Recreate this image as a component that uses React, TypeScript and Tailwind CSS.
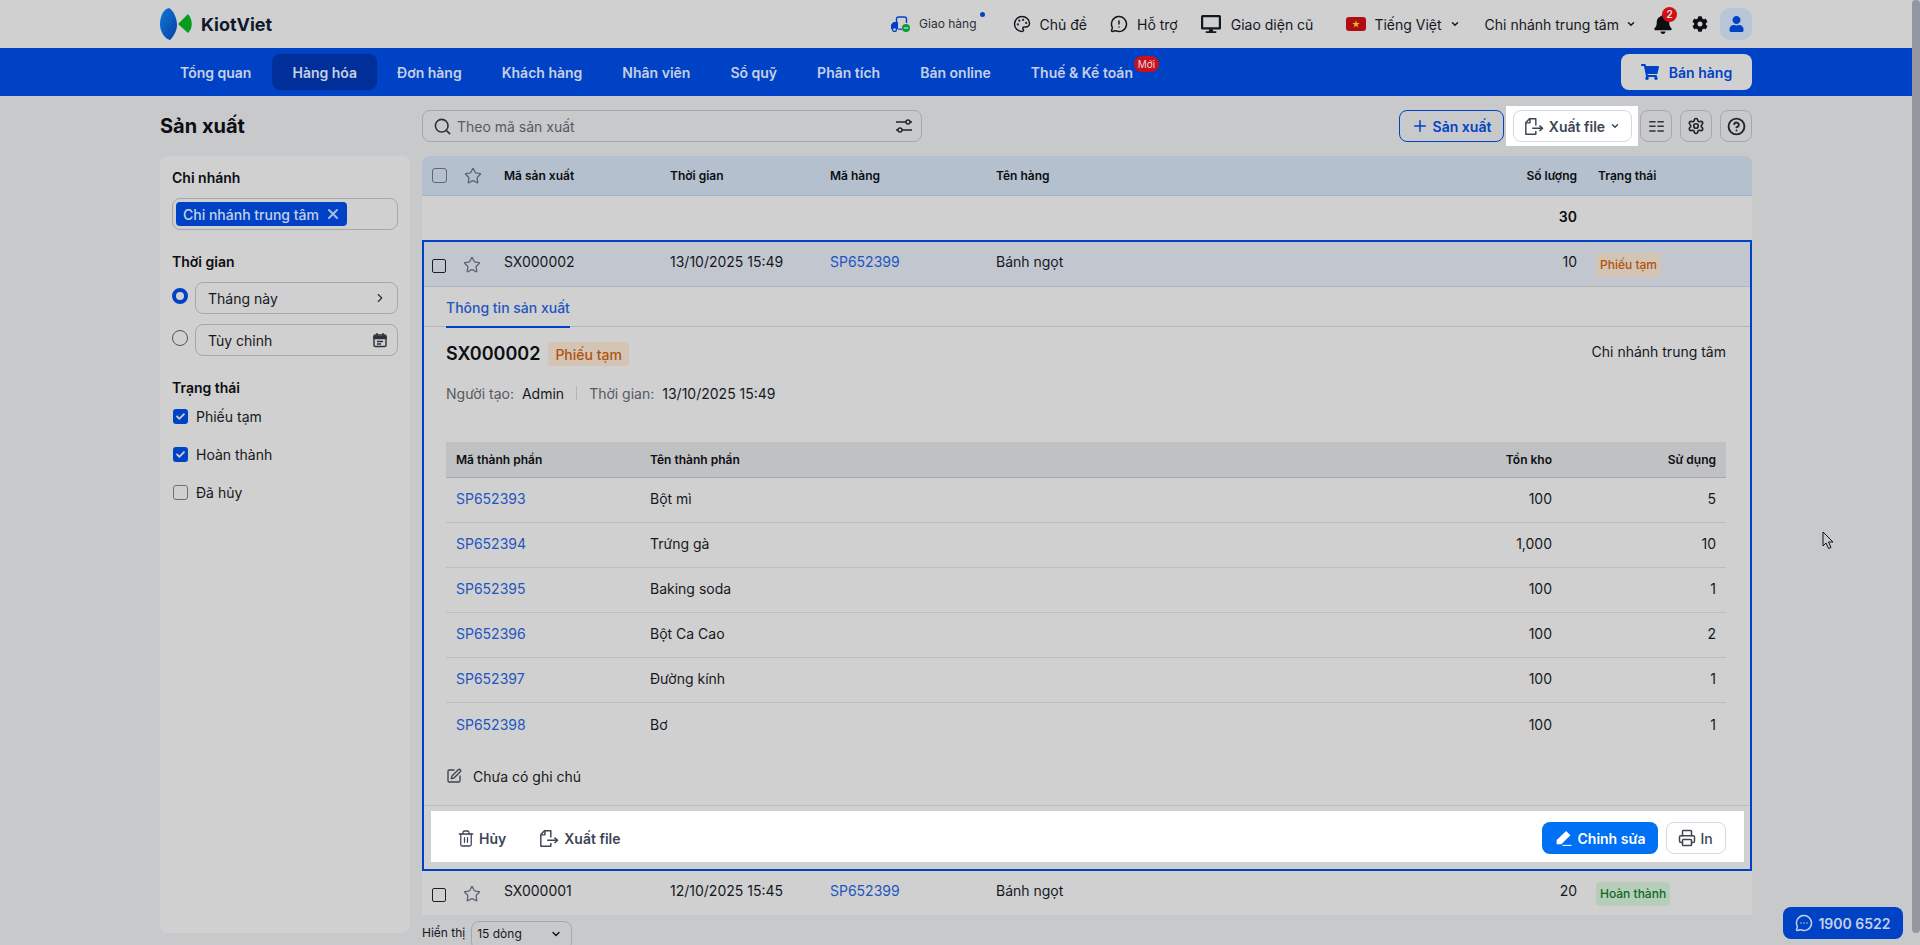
import {
  ChevronDown,
  ChevronRight,
  CircleHelp,
  MessageCircleMore,
  MessageCircleWarning,
  Palette,
  Plus,
  Printer,
  Search,
  Settings,
  SquarePen,
  Star,
  Trash2,
  X,
} from "lucide-react";
import { FaBell, FaCheck, FaCog, FaDesktop, FaShoppingCart, FaUser } from "react-icons/fa";

const navItems = ["Tổng quan", "Hàng hóa", "Đơn hàng", "Khách hàng", "Nhân viên", "Sổ quỹ", "Phân tích", "Bán online"];

const parts = [
  { code: "SP652393", name: "Bột mì", stock: "100", used: "5" },
  { code: "SP652394", name: "Trứng gà", stock: "1,000", used: "10" },
  { code: "SP652395", name: "Baking soda", stock: "100", used: "1" },
  { code: "SP652396", name: "Bột Ca Cao", stock: "100", used: "2" },
  { code: "SP652397", name: "Đường kính", stock: "100", used: "1" },
  { code: "SP652398", name: "Bơ", stock: "100", used: "1" },
];

const ExportIcon = ({ className }: { className?: string }) => (
  <svg viewBox="0 0 22 20" fill="none" stroke="currentColor" strokeWidth="1.6" className={className}>
    <path d="M13 9V1.5H6L2 5.5V18.5H13V15" strokeLinejoin="round" />
    <path d="M6.5 1.5V6H2" strokeLinejoin="round" />
    <path d="M9 12H20M17 9L20.5 12L17 15" strokeLinejoin="round" />
  </svg>
);

const Logo = () => (
  <svg viewBox="0 0 32 32" className="w-[32px] h-[32px] shrink-0">
    <defs>
      <linearGradient id="kv" x1="0" y1="0" x2="1" y2="1">
        <stop offset="0" stopColor="#0c78d2" />
        <stop offset="1" stopColor="#0a3fa8" />
      </linearGradient>
    </defs>
    <path d="M9 0C3 1 0 9 0 16C0 24 5 31 10 32C14 28 17 22 17 17C17 11 14 3 9 0Z" fill="url(#kv)" />
    <path d="M18 16L28 6C33 12 33 20 28 25Z" fill="#079c1a" />
  </svg>
);

const Truck = () => (
  <svg viewBox="0 0 20 16" fill="none" className="w-[20px] h-[16px]">
    <path d="M6.5 6V3C6.5 1.8 7.3 1 8.5 1H14.5C15.7 1 16.5 1.8 16.5 3V7" stroke="#0042c6" strokeWidth="1.4" />
    <path d="M1 13V8.5L3.5 6H8V13Z" fill="#0042c6" />
    <path d="M8 13.2H12" stroke="#0042c6" strokeWidth="1.2" />
    <circle cx="4.5" cy="13.5" r="2" fill="#d0d0d0" stroke="#0042c6" strokeWidth="1.3" />
    <circle cx="16" cy="12" r="4" fill="#0a9a3c" />
    <path d="M13.8 12H18.2" stroke="#d0d0d0" strokeWidth="1.3" />
  </svg>
);

const SlidersIcon = () => (
  <svg viewBox="0 0 18 16" fill="none" stroke="#20242b" strokeWidth="1.4" className="w-[18px] h-[16px]">
    <path d="M1 4H11M15 4H17M1 12H3M7 12H17" />
    <circle cx="13" cy="4" r="2" />
    <circle cx="5" cy="12" r="2" />
  </svg>
);

const StarOutline = () => <Star className="w-[18px] h-[18px] text-[#5d6572]" strokeWidth={1.8} />;

const CheckRow = ({ label, checked }: { label: string; checked: boolean }) => (
  <div className="flex items-center gap-[8px] h-[38px]">
    {checked ? (
      <span className="flex justify-center items-center w-[15px] h-[15px] ml-[1px] rounded-[3px] bg-[#0042c6]">
        <FaCheck className="w-[9px] h-[9px] text-[#d0d0d0]" />
      </span>
    ) : (
      <span className="block w-[15px] h-[15px] ml-[1px] rounded-[3px] border border-[#6b7079]" />
    )}
    <span className="text-[14px] text-[#15181e]">{label}</span>
  </div>
);

const Sidebar = () => (
  <aside className="w-[250px] h-[777px] shrink-0 rounded-[8px] bg-[#d0d0d0] px-[12px] pt-[12px]">
    <h3 className="text-[14px] leading-[20px] font-semibold text-[#0c0e12]">Chi nhánh</h3>
    <div className="flex items-center h-[32px] mt-[10px] px-[3px] rounded-[8px] border border-[#a5a7ad]">
      <span className="flex items-center gap-[6px] h-[24px] pl-[7px] pr-[6px] rounded-[4px] bg-[#0042c6] text-[14px] font-medium text-[#c6d0e4]">
        Chi nhánh trung tâm
        <X className="w-[16px] h-[16px] text-[#a8bde0]" strokeWidth={3} />
      </span>
    </div>

    <h3 className="mt-[22px] text-[14px] leading-[20px] font-semibold text-[#0c0e12]">Thời gian</h3>
    <div className="flex items-center gap-[7px] mt-[10px]">
      <span className="block w-[16px] h-[16px] -mt-[4px] rounded-full border-[4px] border-[#0042c6]" />
      <div className="flex flex-1 justify-between items-center h-[32px] pl-[12px] pr-[10px] rounded-[8px] border border-[#a5a7ad] text-[14px] text-[#15181e]">
        Tháng này
        <ChevronRight className="w-[14px] h-[14px] text-[#2b2f36]" />
      </div>
    </div>
    <div className="flex items-center gap-[7px] mt-[10px]">
      <span className="block w-[16px] h-[16px] -mt-[4px] rounded-full border border-[#4f545c]" />
      <div className="flex flex-1 justify-between items-center h-[32px] pl-[12px] pr-[9px] rounded-[8px] border border-[#a5a7ad] text-[14px] text-[#15181e]">
        Tùy chỉnh
        <svg viewBox="0 0 16 16" className="w-[16px] h-[16px]" fill="none" stroke="#2b323c" strokeWidth="1.4">
          <rect x="2" y="3" width="12" height="11.5" rx="1.5" />
          <path d="M2 4.5H14V6.5H2Z" fill="#2b323c" />
          <path d="M5 1V4M11 1V4" />
          <path d="M5 9.5H11M5 12H9" />
        </svg>
      </div>
    </div>

    <h3 className="mt-[22px] text-[14px] leading-[20px] font-semibold text-[#0c0e12]">Trạng thái</h3>
    <div className="mt-[-1px]">
      <CheckRow label="Phiếu tạm" checked />
      <CheckRow label="Hoàn thành" checked />
      <CheckRow label="Đã hủy" checked={false} />
    </div>
  </aside>
);

const Badge = ({ tone, label }: { tone: "orange" | "green"; label: string }) => (
  <span
    className={`inline-flex items-center h-[24px] px-[4px] rounded-[4px] text-[12px] font-medium ${
      tone === "orange" ? "bg-[#d3c4b4] text-[#b0520f]" : "bg-[#b7ccb9] text-[#0a6b1c]"
    }`}
  >
    {label}
  </span>
);

type RowProps = {
  code: string;
  time: string;
  product: string;
  qty: string;
  status: "orange" | "green";
  label: string;
  selected?: boolean;
};

const Row = ({ code, time, product, qty, status, label, selected }: RowProps) => (
  <div
    className={`flex items-center text-[14px] text-[#15181e] ${
      selected ? "h-[45px] bg-[#c2c7cf] border-b border-[#b3b6bc]" : "h-[44px] bg-[#d0d0d0] px-[2px]"
    }`}
  >
    <div className="flex items-center gap-[17px] w-[80px] pl-[8px] pt-[4px]">
      <span className="block w-[14px] h-[14px] rounded-[2px] border border-[#1b1f27]" />
      <span className="-mt-[3px]">
        <StarOutline />
      </span>
    </div>
    <span className="w-[166px] pb-[5px]">{code}</span>
    <span className="w-[160px] pb-[5px]">{time}</span>
    <span className="w-[166px] pb-[5px] text-[#1f55c0]">{product}</span>
    <span className="flex-1 pb-[5px]">Bánh ngọt</span>
    <span className="w-[50px] pb-[5px] text-right">{qty}</span>
    <span className="w-[173px] pl-[19px] pt-[1px]">
      <Badge tone={status} label={label} />
    </span>
  </div>
);

const Detail = () => (
  <div className="border-2 border-[#0042c6] bg-[#d0d0d0]">
    <Row
      code="SX000002"
      time="13/10/2025 15:49"
      product="SP652399"
      qty="10"
      status="orange"
      label="Phiếu tạm"
      selected
    />

    <div className="flex h-[40px] pl-[22px] border-b border-[#b5b6b9]">
      <span className="flex items-center h-[41px] pt-[1px] border-b-2 border-[#0042c6] text-[14px] font-medium text-[#1f55c0]">
        Thông tin sản xuất
      </span>
    </div>

    <div className="pl-[22px] pr-[24px]">
      <div className="flex justify-between items-start pt-[15px]">
        <div className="flex items-center gap-[8px]">
          <span className="text-[18px] leading-[24px] font-semibold text-[#0c0e12]">SX000002</span>
          <span className="flex items-center h-[24px] px-[7px] rounded-[4px] bg-[#d3c4b4] text-[14px] font-medium text-[#b0520f]">
            Phiếu tạm
          </span>
        </div>
        <span className="text-[14px] leading-[20px] text-[#15181e]">Chi nhánh trung tâm</span>
      </div>

      <div className="flex items-center h-[20px] mt-[17px] text-[14px]">
        <span className="text-[#555a63]">Người tạo:</span>
        <span className="ml-[8px] text-[#15181e]">Admin</span>
        <span className="w-px h-[14px] mx-[12px] bg-[#b5b6b9]" />
        <span className="text-[#555a63]">Thời gian:</span>
        <span className="ml-[8px] text-[#15181e]">13/10/2025 15:49</span>
      </div>

      {/* Component table */}
      <div className="mt-[39px]">
        <div className="flex items-center h-[36px] px-[10px] bg-[#c0c1c3] border-b border-[#a6a8ac] text-[12px] font-semibold text-[#0c0e12]">
          <span className="w-[194px]">Mã thành phần</span>
          <span className="flex-1">Tên thành phần</span>
          <span className="w-[100px] text-right">Tồn kho</span>
          <span className="w-[164px] text-right">Sử dụng</span>
        </div>
        {parts.map((p, i) => (
          <div
            key={p.code}
            className={`flex items-center h-[45px] pb-[3px] px-[10px] text-[14px] text-[#15181e] ${
              i < parts.length - 1 ? "border-b border-[#bcbdc0]" : ""
            }`}
          >
            <span className="w-[194px] text-[#1f55c0]">{p.code}</span>
            <span className="flex-1">{p.name}</span>
            <span className="w-[100px] text-right">{p.stock}</span>
            <span className="w-[164px] text-right">{p.used}</span>
          </div>
        ))}
      </div>

      <div className="flex items-center gap-[11px] h-[20px] mt-[18px] text-[14px] text-[#15181e]">
        <SquarePen className="w-[16px] h-[16px] text-[#3a414c]" />
        Chưa có ghi chú
      </div>
    </div>

    <div className="mt-[19px] pt-[5px] pb-[7px] border-t border-[#bcbdc0]">
      <div className="flex justify-between items-center h-[51px] ml-[7px] mr-[6px] pl-[26px] pr-[18px] pt-[3px] bg-white">
        <div className="flex items-center gap-[33px] text-[14px] font-semibold text-[#3d4654]">
          <span className="flex items-center gap-[4px]">
            <Trash2 className="w-[18px] h-[19px]" strokeWidth={1.7} />
            Hủy
          </span>
          <span className="flex items-center gap-[5px]">
            <ExportIcon className="w-[20px] h-[19px]" />
            Xuất file
          </span>
        </div>
        <div className="flex items-center gap-[8px]">
          <button className="flex justify-center items-center gap-[6px] w-[116px] h-[32px] rounded-[8px] bg-[#0070f4] text-[14px] font-semibold text-white">
            <svg viewBox="0 0 16 16" className="w-[17px] h-[17px]" fill="white">
              <path d="M10.5 1L14.5 5L6 13.5H1.5V9.5Z" />
              <path d="M7 15H15.5V14H7Z" />
            </svg>
            Chỉnh sửa
          </button>
          <button className="flex justify-center items-center gap-[4px] w-[60px] h-[32px] pr-[1px] rounded-[8px] border border-[#d5d8de] bg-white text-[14px] font-medium text-[#3d4654]">
            <Printer className="w-[18px] h-[18px]" strokeWidth={2} />
            In
          </button>
        </div>
      </div>
    </div>
  </div>
);

const MainTable = () => (
  <section className="flex-1 min-w-0">
    <div className="flex items-center h-[40px] rounded-t-[8px] bg-[#b4c0cd] border-b border-[#9fb1cc] text-[12px] font-semibold text-[#0c0e12]">
      <div className="flex items-center gap-[17px] w-[82px] pl-[10px]">
        <span className="block w-[15px] h-[15px] rounded-[3px] border border-[#5f6672]" />
        <StarOutline />
      </div>
      <span className="w-[166px]">Mã sản xuất</span>
      <span className="w-[160px]">Thời gian</span>
      <span className="w-[166px]">Mã hàng</span>
      <span className="flex-1">Tên hàng</span>
      <span className="w-[100px] text-right">Số lượng</span>
      <span className="w-[175px] pl-[21px]">Trạng thái</span>
    </div>
    <div className="flex items-center justify-end h-[44px] pb-[4px] pr-[175px] bg-[#d0d0d0] text-[14px] font-semibold text-[#0c0e12]">
      30
    </div>
    <Detail />
    <Row code="SX000001" time="12/10/2025 15:45" product="SP652399" qty="20" status="green" label="Hoàn thành" />
    <div className="flex items-center gap-[6px] h-[29px] mt-[6px] text-[12px] text-[#15181e]">
      <span className="pb-[5px]">Hiển thị</span>
      <span className="flex justify-between items-center w-[101px] h-[29px] pl-[5px] pr-[9px] pb-[3px] rounded-[8px] border border-[#a5a7ad] text-[12px]">
        15 dòng
        <ChevronDown className="w-[12px] h-[12px]" strokeWidth={3} />
      </span>
    </div>
  </section>
);

export default function App() {
  return (
    <div className="relative flex h-screen overflow-hidden bg-[#c8c9cb] font-['Inter',sans-serif]">
      <div className="flex-1 min-w-0">
        {/* Top bar */}
        <header className="h-[48px] bg-[#d0d0d0]">
          <div className="flex justify-between items-center w-[1592px] h-full mx-auto">
            <div className="flex items-center gap-[9px]">
              <Logo />
              <span className="text-[18px] font-bold text-[#10182e]">KiotViet</span>
            </div>
            <div className="flex items-center text-[14px] text-[#15181e]">
              <div className="relative flex items-center gap-[9px] text-[12px] text-[#2b313b]">
                <Truck />
                Giao hàng
                <span className="absolute -top-[3px] -right-[8px] w-[5px] h-[5px] rounded-full bg-[#0042c6]" />
              </div>
              <div className="flex items-center gap-[9px] ml-[36px]">
                <Palette className="w-[18px] h-[18px]" />
                Chủ đề
              </div>
              <div className="flex items-center gap-[9px] ml-[23px]">
                <MessageCircleWarning className="w-[18px] h-[18px]" />
                Hỗ trợ
              </div>
              <div className="flex items-center gap-[10px] ml-[23px]">
                <FaDesktop className="w-[20px] h-[18px]" />
                Giao diện cũ
              </div>
              <div className="flex items-center gap-[8px] ml-[33px]">
                <svg viewBox="0 0 20 14" className="w-[20px] h-[14px]">
                  <rect width="20" height="14" rx="3" fill="#b00d12" />
                  <path
                    d="M10 3.2L10.9 6H13.8L11.4 7.7L12.3 10.5L10 8.8L7.7 10.5L8.6 7.7L6.2 6H9.1Z"
                    fill="#d8c024"
                  />
                </svg>
                Tiếng Việt
                <ChevronDown className="w-[10px] h-[10px]" strokeWidth={3.5} />
              </div>
              <div className="flex items-center gap-[7px] ml-[25px]">
                Chi nhánh trung tâm
                <ChevronDown className="w-[10px] h-[10px]" strokeWidth={3.5} />
              </div>
              <div className="relative ml-[18px]">
                <FaBell className="w-[18px] h-[20px] text-[#0c0e12]" />
                <span className="absolute -top-[7px] -right-[5px] flex justify-center items-center w-[15px] h-[15px] rounded-full bg-[#d40f14] text-[10px] font-semibold text-[#e8e8e8]">
                  2
                </span>
              </div>
              <FaCog className="w-[16px] h-[16px] ml-[20px] text-[#0c0e12]" />
              <span className="flex justify-center items-center w-[32px] h-[32px] ml-[12px] rounded-[10px] bg-[#b8c5d6]">
                <FaUser className="w-[15px] h-[16px] text-[#0042c6]" />
              </span>
            </div>
          </div>
        </header>

        {/* Main nav */}
        <nav className="h-[48px] bg-[#0042c6]">
          <div className="flex justify-between items-center w-[1592px] h-full mx-auto">
            <ul className="flex items-center text-[14px] font-semibold text-[#c6d0e4]">
              {navItems.map((item) => (
                <li
                  key={item}
                  className={`flex items-center h-[36px] px-[20px] first:pr-[21px] rounded-[8px] ${
                    item === "Hàng hóa" ? "bg-[#002f99]" : ""
                  }`}
                >
                  {item}
                </li>
              ))}
              <li className="relative flex items-center h-[36px] px-[20px]">
                Thuế &amp; Kế toán
                <span className="absolute top-[2px] right-[-6px] flex justify-center items-center w-[25px] h-[16px] rounded-full bg-[#c8101e] text-[10px] font-normal text-[#e8d8d8]">
                  Mới
                </span>
              </li>
            </ul>
            <button className="flex justify-center items-center gap-[10px] w-[131px] h-[36px] rounded-[8px] bg-[#d0d0d0] text-[14px] font-semibold text-[#0042c6]">
              <FaShoppingCart className="w-[18px] h-[18px]" />
              Bán hàng
            </button>
          </div>
        </nav>

        {/* Page */}
        <div className="w-[1592px] mx-auto">
          <div className="flex items-center gap-[12px] h-[60px]">
            <h1 className="w-[250px] text-[20px] font-bold text-[#0c0e12]">Sản xuất</h1>
            <div className="flex items-center gap-[5px] w-[500px] h-[32px] pl-[10px] pr-[8px] rounded-[8px] border border-[#a5a7ad] text-[14px] text-[#555a63]">
              <Search className="w-[19px] h-[19px] text-[#2b2f36]" />
              <span className="flex-1">Theo mã sản xuất</span>
              <SlidersIcon />
            </div>
            <div className="flex flex-1 justify-end items-center">
              <button className="flex justify-center items-center gap-[4px] w-[105px] h-[32px] pr-[1px] rounded-[8px] border border-[#0042c6] text-[14px] font-semibold text-[#0042c6]">
                <Plus className="w-[18px] h-[18px]" />
                Sản xuất
              </button>
              <div className="flex justify-center items-center w-[132px] h-[40px] ml-[2px] bg-white">
                <button className="flex justify-center items-center gap-[5px] w-[119px] h-[32px] rounded-[8px] border border-[#d5d8de] bg-white text-[14px] font-semibold text-[#3d4654]">
                  <ExportIcon className="w-[20px] h-[19px]" />
                  Xuất file
                  <ChevronDown className="w-[10px] h-[10px]" strokeWidth={3.5} />
                </button>
              </div>
              <button className="flex justify-center items-center w-[32px] h-[32px] ml-[2px] rounded-[8px] border border-[#a5a7ad]">
                <svg viewBox="0 0 16 12" className="w-[15px] h-[11px]" fill="#30353d">
                  <path d="M0 0H7V1.6H0ZM9 0H16V1.6H9ZM0 5H7V6.6H0ZM9 5H16V6.6H9ZM0 10H7V11.6H0ZM9 10H16V11.6H9Z" />
                </svg>
              </button>
              <button className="flex justify-center items-center w-[32px] h-[32px] ml-[8px] rounded-[8px] border border-[#a5a7ad]">
                <Settings className="w-[18px] h-[18px] text-[#20242b]" strokeWidth={2.2} />
              </button>
              <button className="flex justify-center items-center w-[32px] h-[32px] ml-[8px] rounded-[8px] border border-[#a5a7ad]">
                <CircleHelp className="w-[19px] h-[19px] text-[#20242b]" strokeWidth={2.4} />
              </button>
            </div>
          </div>
          <div className="flex gap-[12px]">
            <Sidebar />
            <MainTable />
          </div>
        </div>
      </div>

      {/* Scrollbar */}
      <div className="w-[8px] shrink-0 h-[933px] rounded-[4px] bg-[#9396a0]" />

      {/* Hotline */}
      <button className="absolute left-[1783px] top-[907px] flex justify-center items-center gap-[5px] w-[120px] h-[32px] rounded-[8px] bg-[#0042c6] text-[14px] font-semibold text-[#c6d0e4]">
        <MessageCircleMore className="w-[18px] h-[18px]" />
        1900 6522
      </button>

      {/* Mouse cursor */}
      <svg viewBox="0 0 12 19" className="absolute left-[1822px] top-[531px] w-[12px] h-[19px]">
        <path d="M1 1V15L4 12L6.5 17.5L9 16.5L6.5 11H11Z" fill="#c8c9cb" stroke="#111" strokeWidth="1" />
      </svg>
    </div>
  );
}
